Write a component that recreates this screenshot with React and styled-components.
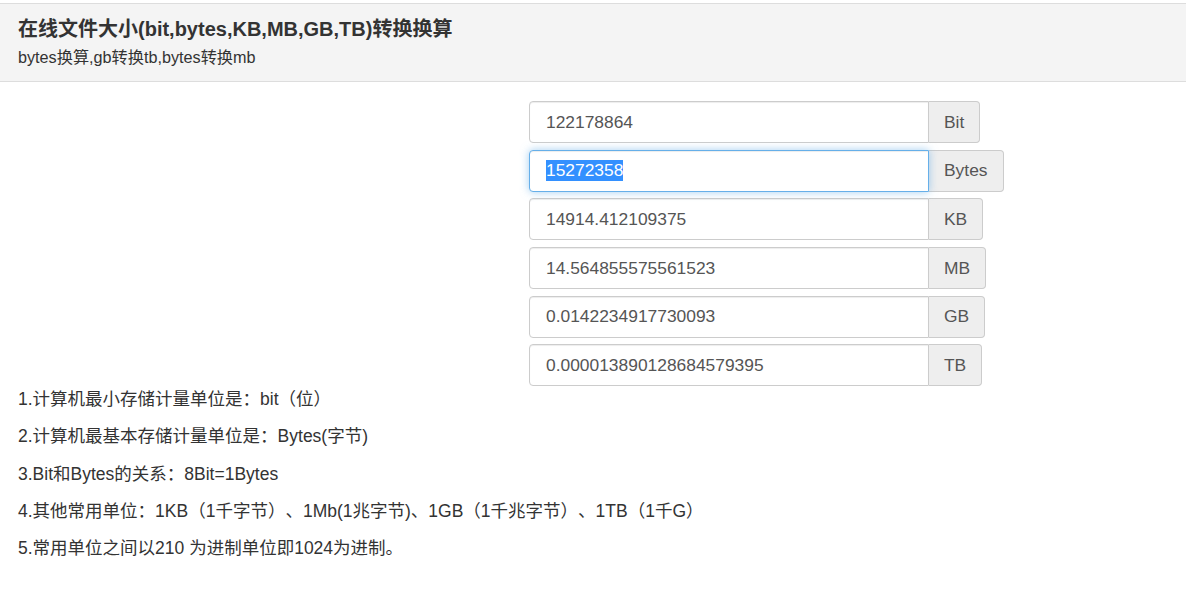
import React, { useEffect, useRef } from "react";
import styled, { createGlobalStyle } from "styled-components";

const GlobalStyle = createGlobalStyle`
	html, body {
		margin: 0;
		padding: 0;
		background: #fff;
	}
	body {
		font-family: "Liberation Sans", Arial, "Noto Sans CJK SC", sans-serif;
		color: #333;
		text-spacing-trim: space-all;
	}
`;

const units = [
	{ unit: "Bit", value: "122178864" },
	{ unit: "Bytes", value: "15272358", active: true },
	{ unit: "KB", value: "14914.412109375" },
	{ unit: "MB", value: "14.564855575561523" },
	{ unit: "GB", value: "0.0142234917730093" },
	{ unit: "TB", value: "0.000013890128684579395" },
];

const notes = [
	"1.计算机最小存储计量单位是：bit（位）",
	"2.计算机最基本存储计量单位是：Bytes(字节)",
	"3.Bit和Bytes的关系：8Bit=1Bytes",
	"4.其他常用单位：1KB（1千字节）、1Mb(1兆字节)、1GB（1千兆字节）、1TB（1千G）",
	"5.常用单位之间以210 为进制单位即1024为进制。",
];

const Converter = () => {
	const activeRef = useRef(null);

	useEffect(() => {
		if (activeRef.current) {
			activeRef.current.focus();
			activeRef.current.select();
		}
	}, []);

	return (
		<Page>
			<GlobalStyle />
			<Header>
				<Title>在线文件大小(bit,bytes,KB,MB,GB,TB)转换换算</Title>
				<SubTitle>bytes换算,gb转换tb,bytes转换mb</SubTitle>
			</Header>

			<Form>
				{units.map((u) => (
					<InputGroup key={u.unit}>
						<Field
							readOnly
							defaultValue={u.value}
							$active={u.active}
							ref={u.active ? activeRef : null}
						/>
						<Addon>{u.unit}</Addon>
					</InputGroup>
				))}
			</Form>

			<Notes>
				{notes.map((n) => (
					<Note key={n}>{n}</Note>
				))}
			</Notes>
		</Page>
	);
};

const Page = styled.div`
	padding-top: 3px;
`;

const Header = styled.div`
	display: flex;
	flex-flow: column nowrap;
	gap: 5px;
	background: #f4f4f4;
	border-top: 1px solid #ddd;
	border-bottom: 1px solid #ddd;
	padding: 12px 18px 14px;
`;

const Title = styled.h1`
	margin: 0;
	font-size: 20px;
	font-weight: 700;
	line-height: 26px;
	color: #333;
`;

const SubTitle = styled.p`
	margin: 0;
	font-size: 16.2px;
	line-height: 20px;
	color: #333;
`;

const Form = styled.div`
	display: flex;
	flex-flow: column nowrap;
	gap: 6.7px;
	padding: 19px 0 0 529px;
`;

const InputGroup = styled.div`
	display: flex;
	flex-flow: row nowrap;
	height: 42px;
`;

const Field = styled.input`
	box-sizing: border-box;
	width: 400px;
	height: 42px;
	margin: 0;
	padding: 0 16px;
	font-family: inherit;
	font-size: 17.4px;
	color: #555;
	background: #fff;
	border: 1px solid ${(props) => (props.$active ? "#66afe9" : "#ccc")};
	border-radius: 4px 0 0 4px;
	outline: none;
	box-shadow: ${(props) =>
		props.$active
			? "inset 0 1px 1px rgba(0,0,0,.075), 0 0 8px rgba(102,175,233,.6)"
			: "inset 0 1px 1px rgba(0,0,0,.075)"};
	position: relative;
	z-index: ${(props) => (props.$active ? 2 : 1)};

	&::selection {
		background: #3390ff;
		color: #fff;
	}
`;

const Addon = styled.span`
	box-sizing: border-box;
	display: flex;
	align-items: center;
	height: 42px;
	padding: 0 15px;
	font-size: 17.4px;
	color: #555;
	background: #eee;
	border: 1px solid #ccc;
	border-left: none;
	border-radius: 0 4px 4px 0;
`;

const Notes = styled.div`
	display: flex;
	flex-flow: column nowrap;
	gap: 14.8px;
	padding: 1.5px 18px 0;
`;

const Note = styled.p`
	margin: 0;
	font-size: 17.5px;
	line-height: 22.5px;
	color: #333;
`;

export default Converter;
